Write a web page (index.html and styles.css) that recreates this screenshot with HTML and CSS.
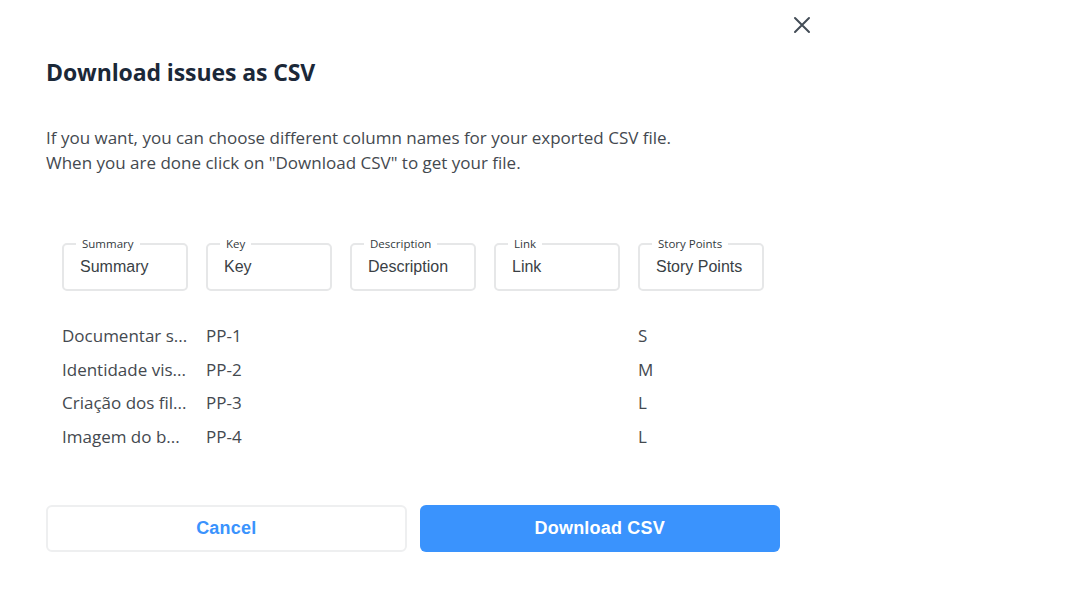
FILE: index.html
```html
<!DOCTYPE html>
<html lang="en">
<head>
<meta charset="utf-8">
<title>Download issues as CSV</title>
<link rel="stylesheet" href="styles.css">
</head>
<body>
<div class="modal">
  <button class="close" aria-label="Close">
    <svg width="18" height="18" viewBox="0 0 18 18"><path d="M2 2 L16 16 M16 2 L2 16" stroke="#444d57" stroke-width="2" stroke-linecap="round" fill="none"/></svg>
  </button>
  <h1 class="title">Download issues as CSV</h1>
  <p class="intro">If you want, you can choose different column names for your exported CSV file.<br>When you are done click on "Download CSV" to get your file.</p>

  <div class="fields">
    <label class="field"><span class="field-label">Summary</span><input class="field-input" value="Summary"></label>
    <label class="field"><span class="field-label">Key</span><input class="field-input" value="Key"></label>
    <label class="field"><span class="field-label">Description</span><input class="field-input" value="Description"></label>
    <label class="field"><span class="field-label">Link</span><input class="field-input" value="Link"></label>
    <label class="field"><span class="field-label">Story Points</span><input class="field-input" value="Story Points"></label>
  </div>

  <div class="rows">
    <div class="row"><span class="cell">Documentar s...</span><span class="cell">PP-1</span><span class="cell"></span><span class="cell"></span><span class="cell">S</span></div>
    <div class="row"><span class="cell">Identidade vis...</span><span class="cell">PP-2</span><span class="cell"></span><span class="cell"></span><span class="cell">M</span></div>
    <div class="row"><span class="cell">Criação dos fil...</span><span class="cell">PP-3</span><span class="cell"></span><span class="cell"></span><span class="cell">L</span></div>
    <div class="row"><span class="cell">Imagem do b...</span><span class="cell">PP-4</span><span class="cell"></span><span class="cell"></span><span class="cell">L</span></div>
  </div>

  <div class="actions">
    <button class="btn btn-secondary">Cancel</button>
    <button class="btn btn-primary">Download CSV</button>
  </div>
</div>
</body>
</html>
```
FILE: styles.css
```css
* { box-sizing: border-box; }
html, body { margin: 0; background: #fff; }
body { font-family: "Open Sans", "Noto Sans", sans-serif; color: #42474d; }

.modal {
  position: relative;
  width: 734px;
  margin-left: 46px;
  padding-top: 57px;
}

.close {
  position: absolute;
  top: 16px;
  right: -31px;
  width: 18px;
  height: 18px;
  padding: 0;
  border: 0;
  background: none;
  cursor: pointer;
}
.close svg { display: block; }

.title {
  margin: 0;
  font-size: 23px;
  line-height: 30px;
  font-weight: 700;
  color: #1b2838;
  letter-spacing: -0.1px;
}

.intro {
  margin: 38px 0 0;
  font-size: 17px;
  line-height: 25px;
  color: #44494f;
}

.fields {
  display: grid;
  grid-template-columns: repeat(5, 126px);
  column-gap: 18px;
  margin: 68px 0 0 16px;
}

.field {
  position: relative;
  display: block;
  height: 48px;
  border: 2px solid #e6e7e8;
  border-radius: 5px;
}

.field-label {
  position: absolute;
  top: -8px;
  left: 12px;
  padding: 0 6px;
  background: #fff;
  font-size: 11.5px;
  line-height: 13px;
  color: #333a40;
}

.field-input {
  display: block;
  width: 100%;
  height: 100%;
  border: 0;
  outline: none;
  padding: 0 0 0 16px;
  background: transparent;
  font-family: "Liberation Sans", Arial, sans-serif;
  font-size: 16px;
  color: #3a3f45;
}

.rows {
  margin: 28px 0 0 16px;
}

.row {
  display: grid;
  grid-template-columns: repeat(5, 126px);
  column-gap: 18px;
  height: 33.5px;
  align-items: center;
}

.cell {
  font-size: 17px;
  color: #44494f;
  white-space: nowrap;
  overflow: hidden;
}

.actions {
  display: grid;
  grid-template-columns: 1fr 1fr;
  column-gap: 13px;
  margin-top: 52px;
}

.btn {
  height: 47px;
  border-radius: 6px;
  font-family: "Liberation Sans", Arial, sans-serif;
  font-size: 18px;
  font-weight: 700;
  letter-spacing: 0.2px;
  cursor: pointer;
}

.btn-secondary {
  border: 2px solid #eeeff0;
  background: #fff;
  color: #3a93fd;
}

.btn-primary {
  border: 0;
  background: #3a93fd;
  color: #fff;
}
```
